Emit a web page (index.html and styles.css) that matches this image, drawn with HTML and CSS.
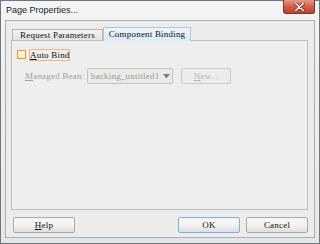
FILE: index.html
```html
<!DOCTYPE html>
<html lang="en">
<head>
  <meta charset="UTF-8">
  <title>Page Properties...</title>
  <link rel="stylesheet" href="styles.css">
</head>
<body>
  <div class="window">
    <div class="titlebar">
      <span class="title">Page Properties...</span>
      <span class="close">
        <svg width="11" height="8" viewBox="0 0 11 8">
          <path d="M1.5 0.5 L9.5 7.5 M9.5 0.5 L1.5 7.5" stroke="#7a2418" stroke-width="3" stroke-linecap="round"/>
          <path d="M1.5 0.5 L9.5 7.5 M9.5 0.5 L1.5 7.5" stroke="#ffffff" stroke-width="1.6" stroke-linecap="round"/>
        </svg>
      </span>
    </div>

    <div class="client">
      <div class="tabs">
        <div class="tab">Request Parameters</div>
        <div class="tab active">Component Binding</div>
      </div>

      <div class="panel">
        <div class="check-row">
          <span class="checkbox"></span>
          <span class="focus"><u>A</u>uto Bind</span>
        </div>
        <div class="bean-row">
          <span class="label"><u>M</u>anaged Bean:</span>
          <div class="combo">
            <span>backing_untitled1</span>
            <svg width="7" height="5" viewBox="0 0 7 5"><path d="M0 0 H7 L3.5 4.5 Z" fill="#7c7c7c"/></svg>
          </div>
          <button class="btn new" disabled><u>N</u>ew...</button>
        </div>
      </div>

      <div class="footer">
        <button class="btn help"><u>H</u>elp</button>
        <button class="btn default">OK</button>
        <button class="btn">Cancel</button>
      </div>
    </div>
  </div>
</body>
</html>
```

FILE: styles.css
```css
body {
  margin: 0;
  width: 320px;
  height: 244px;
  overflow: hidden;
  background-color: #ffffff;
}
.window {
  box-sizing: border-box;
  width: 320px;
  height: 244px;
  border: 1px solid #6f767f;
  padding: 0 4px 5px 4px;
  display: flex;
  flex-direction: column;
  background: linear-gradient(#f3f4f6, #e4e7ea);
}
.titlebar {
  height: 19px;
  display: flex;
  align-items: flex-start;
}
.title {
  margin: 4px 0 0 1px;
  font-family: "Liberation Sans", Arial, sans-serif;
  font-size: 9px;
  color: #1c1c1c;
}
.close {
  margin-left: auto;
  margin-top: -1px;
  width: 32px;
  height: 14px;
  box-sizing: border-box;
  border: 1px solid #8c2d20;
  border-top: none;
  border-radius: 0 0 3px 3px;
  background: linear-gradient(#e19a8c, #d0604d 50%, #c2402c);
  display: flex;
  align-items: center;
  justify-content: center;
}
.client {
  flex: 1;
  border: 1px solid #a8adb4;
  background-color: #ececec;
  padding: 6px 6px 4px 5px;
  display: flex;
  flex-direction: column;
  font-family: "Liberation Serif", "Times New Roman", serif;
  font-size: 9px;
  letter-spacing: 0.2px;
  color: #111111;
  white-space: nowrap;
}
.tabs {
  height: 13px;
  display: flex;
  align-items: flex-end;
  padding-left: 1px;
}
.tab {
  box-sizing: border-box;
  width: 91px;
  height: 11px;
  border: 1px solid #b4b4b4;
  border-bottom: none;
  background: linear-gradient(#f4f4f4, #e2e2e2);
  text-align: center;
  line-height: 10px;
}
.tab.active {
  width: 88px;
  height: 14px;
  margin-bottom: -1px;
  position: relative;
  line-height: 12px;
  border-color: #b7c6d4;
  background: linear-gradient(#eef6fd, #d9e9f7);
}
.panel {
  height: 170px;
  box-sizing: border-box;
  border: 1px solid #bdbdbd;
  background-color: #eeeeee;
  padding: 8px 5px;
}
.check-row {
  display: flex;
  align-items: center;
  height: 11px;
}
.checkbox {
  box-sizing: border-box;
  width: 9px;
  height: 9px;
  border: 1px solid #e09a2c;
  background: linear-gradient(#fffaf0, #fbe9c6);
}
.focus {
  margin-left: 3px;
  box-sizing: border-box;
  width: 41px;
  height: 12px;
  border: 1px solid #f2b77a;
  text-align: center;
  line-height: 10px;
}
.bean-row {
  margin-top: 8px;
  margin-left: 8px;
  display: flex;
  align-items: center;
  height: 16px;
}
.label {
  width: 62px;
  color: #a3a39a;
}
.combo {
  box-sizing: border-box;
  width: 86px;
  height: 16px;
  border: 1px solid #c3c3c3;
  border-radius: 2px;
  background-color: #eaeaea;
  color: #9c9c92;
  display: flex;
  align-items: center;
  justify-content: space-between;
  padding: 0 2px 0 3px;
}
.btn {
  box-sizing: border-box;
  height: 16px;
  width: 62px;
  padding: 0;
  border: 1px solid #a9a9a9;
  border-radius: 2px;
  background: linear-gradient(#f5f5f5 45%, #dedede);
  font-family: "Liberation Serif", "Times New Roman", serif;
  font-size: 9px;
  letter-spacing: 0.2px;
  color: #111111;
  line-height: 9px;
}
.btn.new {
  width: 50px;
  margin-left: 8px;
  border-color: #cacaca;
  background: #ececec;
  color: #b4b4b0;
}
.btn.default {
  border-color: #7fb1de;
  margin-left: auto;
}
.btn + .btn {
  margin-left: 6px;
}
.btn.help + .btn.default {
  margin-left: auto;
}
.footer {
  margin-top: 7px;
  padding-left: 2px;
  display: flex;
}
```
